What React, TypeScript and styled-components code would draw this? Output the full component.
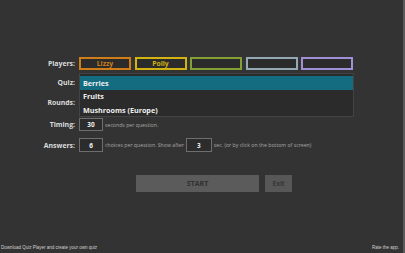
import styled, { createGlobalStyle } from "styled-components";

const GlobalStyle = createGlobalStyle`
  html, body {
    margin: 0;
    padding: 0;
    background: #333333;
  }
`;

const Screen = styled.div`
  width: 405px;
  height: 253px;
  box-sizing: border-box;
  background: #333333;
  border-right: 2px solid #5a5a5a;
  display: flex;
  flex-direction: column;
  font-family: "Open Sans", "Noto Sans", sans-serif;
  overflow: hidden;
`;

const Form = styled.div`
  display: grid;
  grid-template-columns: 75px 1fr;
  column-gap: 4px;
  padding-top: 56px;
`;

const Label = styled.div<{ $top?: number }>`
  height: 14px;
  margin-top: ${(p) => p.$top ?? 0}px;
  display: flex;
  align-items: center;
  justify-content: flex-end;
  font-size: 6.9px;
  font-weight: 700;
  color: #dcdcdc;
`;

const Cell = styled.div<{ $top?: number }>`
  height: 14px;
  margin-top: ${(p) => p.$top ?? 0}px;
  display: flex;
  align-items: center;
  position: relative;
`;

const Players = styled.div`
  display: flex;
  gap: 3.5px;
`;

const PlayerBox = styled.div<{ $color: string }>`
  width: 52px;
  height: 13px;
  box-sizing: border-box;
  border: 2px solid ${(p) => p.$color};
  background: #2b2b2b;
  color: ${(p) => p.$color};
  font-size: 6.8px;
  font-weight: 700;
  display: flex;
  align-items: center;
  justify-content: center;
`;

const DropList = styled.div`
  position: absolute;
  left: 0;
  top: -2px;
  width: 275px;
  height: 44px;
  box-sizing: border-box;
  border: 1px solid #434343;
  background: #2b2b2b;
  padding-top: 2px;
  z-index: 2;
`;

const DropItem = styled.div<{ $selected?: boolean }>`
  height: 13.5px;
  display: flex;
  align-items: center;
  padding-left: 3px;
  background: ${(p) => (p.$selected ? "#136c80" : "transparent")};
  color: #f0f0f0;
  font-size: 7.2px;
  font-weight: 700;
`;

const NumBox = styled.div<{ $h?: number; $w?: number }>`
  width: ${(p) => p.$w ?? 24}px;
  height: ${(p) => p.$h ?? 13}px;
  box-sizing: border-box;
  border: 1px solid #6e6e6e;
  background: #2c2c2c;
  color: #f2f2f2;
  font-size: 6.4px;
  font-weight: 700;
  display: flex;
  align-items: center;
  justify-content: center;
  flex-shrink: 0;
`;

const Hint = styled.span`
  font-size: 5.2px;
  color: #a8a8a8;
  margin: 0 2px;
  white-space: nowrap;
`;

const Actions = styled.div`
  display: flex;
  gap: 6px;
  padding-left: 136px;
  margin-top: 23px;
`;

const Button = styled.div<{ $w: number; $bold?: boolean }>`
  width: ${(p) => p.$w}px;
  height: 17px;
  background: ${(p) => (p.$bold ? "#5b5b5b" : "#575757")};
  color: #303030;
  font-size: ${(p) => (p.$bold ? 7 : 6.8)}px;
  font-weight: ${(p) => (p.$bold ? 700 : 600)};
  display: flex;
  align-items: center;
  justify-content: center;
`;

const Footer = styled.div`
  margin-top: auto;
  display: flex;
  justify-content: space-between;
  padding: 0 4px 1px 1px;
  font-family: "Liberation Sans", Arial, sans-serif;
  font-size: 4.5px;
  color: #d2d2d2;
  line-height: 8px;
`;

const players = [
  { name: "Lizzy", color: "#cf7d16" },
  { name: "Polly", color: "#d1b312" },
  { name: "", color: "#84a034" },
  { name: "", color: "#93aab4" },
  { name: "", color: "#a090d8" },
];

export default function App() {
  return (
    <Screen>
      <GlobalStyle />
      <Form>
        <Label>Players:</Label>
        <Cell>
          <Players>
            {players.map((p, i) => (
              <PlayerBox key={i} $color={p.color}>
                {p.name}
              </PlayerBox>
            ))}
          </Players>
        </Cell>

        <Label $top={5}>Quiz:</Label>
        <Cell $top={5}>
          <DropList>
            <DropItem $selected>Berries</DropItem>
            <DropItem>Fruits</DropItem>
            <DropItem>Mushrooms (Europe)</DropItem>
          </DropList>
        </Cell>

        <Label $top={6}>Rounds:</Label>
        <Cell $top={6} />

        <Label $top={8.5}>Timing:</Label>
        <Cell $top={8.5}>
          <NumBox>30</NumBox>
          <Hint>seconds per question.</Hint>
        </Cell>

        <Label $top={6.5}>Answers:</Label>
        <Cell $top={6.5}>
          <NumBox $h={14}>6</NumBox>
          <Hint>choices per question. Show after</Hint>
          <NumBox $h={14} $w={26}>
            3
          </NumBox>
          <Hint>sec. (or by click on the bottom of screen)</Hint>
        </Cell>
      </Form>

      <Actions>
        <Button $w={123} $bold>
          START
        </Button>
        <Button $w={27}>Exit</Button>
      </Actions>

      <Footer>
        <span>Download Quiz Player and create your own quiz</span>
        <span>Rate the app.</span>
      </Footer>
    </Screen>
  );
}
